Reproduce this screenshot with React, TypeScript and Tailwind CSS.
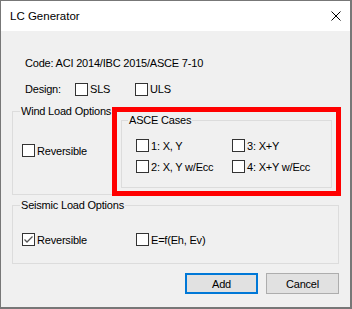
import React from 'react';

const Check: React.FC<{ label: string; checked?: boolean }> = ({ label, checked }) => (
  <label className="flex items-center gap-[2px] h-[13px] whitespace-nowrap">
    <span className="relative w-[13px] h-[13px] shrink-0 border border-[#333333] bg-white">
      {checked && (
        <svg className="absolute left-0 top-0" width="11" height="11" viewBox="0 0 11 11">
          <path d="M1.5 5.5 L4 8 L9.5 2.5" fill="none" stroke="#555555" strokeWidth="1.3" />
        </svg>
      )}
    </span>
    <span className="leading-4">{label}</span>
  </label>
);

const Group: React.FC<{ title: string; legendLeft: string; className: string; children: React.ReactNode }> = ({
  title,
  legendLeft,
  className,
  children,
}) => (
  <div className={`relative border border-[#dcdcdc] ${className}`}>
    <span className={`absolute top-[-9px] ${legendLeft} px-px bg-[#f0f0f0] leading-4 whitespace-nowrap`}>{title}</span>
    {children}
  </div>
);

export default function App() {
  return (
    <div
      className="relative w-[352px] h-[309px] flex flex-col border-l border-t border-r-2 border-b-2 border-[#777777] text-[11px] tracking-[-0.2px] text-black"
      style={{ fontFamily: '"Liberation Sans", Arial, sans-serif' }}
    >
      {/* Title bar */}
      <div className="h-[30px] bg-white flex items-center justify-between pl-[9px] pr-[9px]">
        <span className="leading-4 text-[11.5px] tracking-normal">LC Generator</span>
        <svg width="10" height="10" viewBox="0 0 10 10">
          <path d="M0.5 0.5 L9.5 9.5 M9.5 0.5 L0.5 9.5" stroke="#000" strokeWidth="1" />
        </svg>
      </div>

      {/* Body */}
      <div className="flex-1 bg-[#f0f0f0] pt-[24px]">
        <div className="pl-[24px] h-4 leading-4">Code: ACI 2014/IBC 2015/ASCE 7-10</div>

        <div className="mt-[10px] pl-[24px] h-4 flex items-center">
          <span className="w-[50px] leading-4">Design:</span>
          <div className="w-[60px]">
            <Check label="SLS" />
          </div>
          <Check label="ULS" />
        </div>

        {/* Wind */}
        <Group title="Wind Load Options" legendLeft="left-[7px]" className="mt-[14px] ml-[11px] w-[327px] h-[84px] flex">
          <div className="w-[108px] pl-[9px] pt-[32px]">
            <Check label="Reversible" />
          </div>
          <Group title="ASCE Cases" legendLeft="left-[6px]" className="mt-[8px] w-[211px] h-[68px]">
            <div className="grid grid-cols-[96px_auto] gap-y-[8px] pl-[14px] pt-[18px]">
              <Check label="1: X, Y" />
              <Check label="3: X+Y" />
              <Check label="2: X, Y w/Ecc" />
              <Check label="4: X+Y w/Ecc" />
            </div>
          </Group>
        </Group>

        {/* Seismic */}
        <Group title="Seismic Load Options" legendLeft="left-[7px]" className="mt-[10px] ml-[11px] w-[327px] h-[59px]">
          <div className="flex pl-[9px] pt-[27px]">
            <div className="w-[114px]">
              <Check label="Reversible" checked />
            </div>
            <Check label="E=f(Eh, Ev)" />
          </div>
        </Group>

        {/* Buttons */}
        <div className="mt-[9px] ml-[11px] w-[327px] flex justify-end gap-[8px]">
          <button className="w-[73px] h-[21px] border-2 border-[#0078d7] bg-[#e1e1e1] leading-4">Add</button>
          <button className="w-[73px] h-[21px] border border-[#adadad] bg-[#e1e1e1] leading-4">Cancel</button>
        </div>
      </div>

      {/* Annotation highlight */}
      <div className="absolute left-[111px] top-[106px] w-[229px] h-[89px] border-[5px] border-[#ff0000] pointer-events-none" />
    </div>
  );
}
